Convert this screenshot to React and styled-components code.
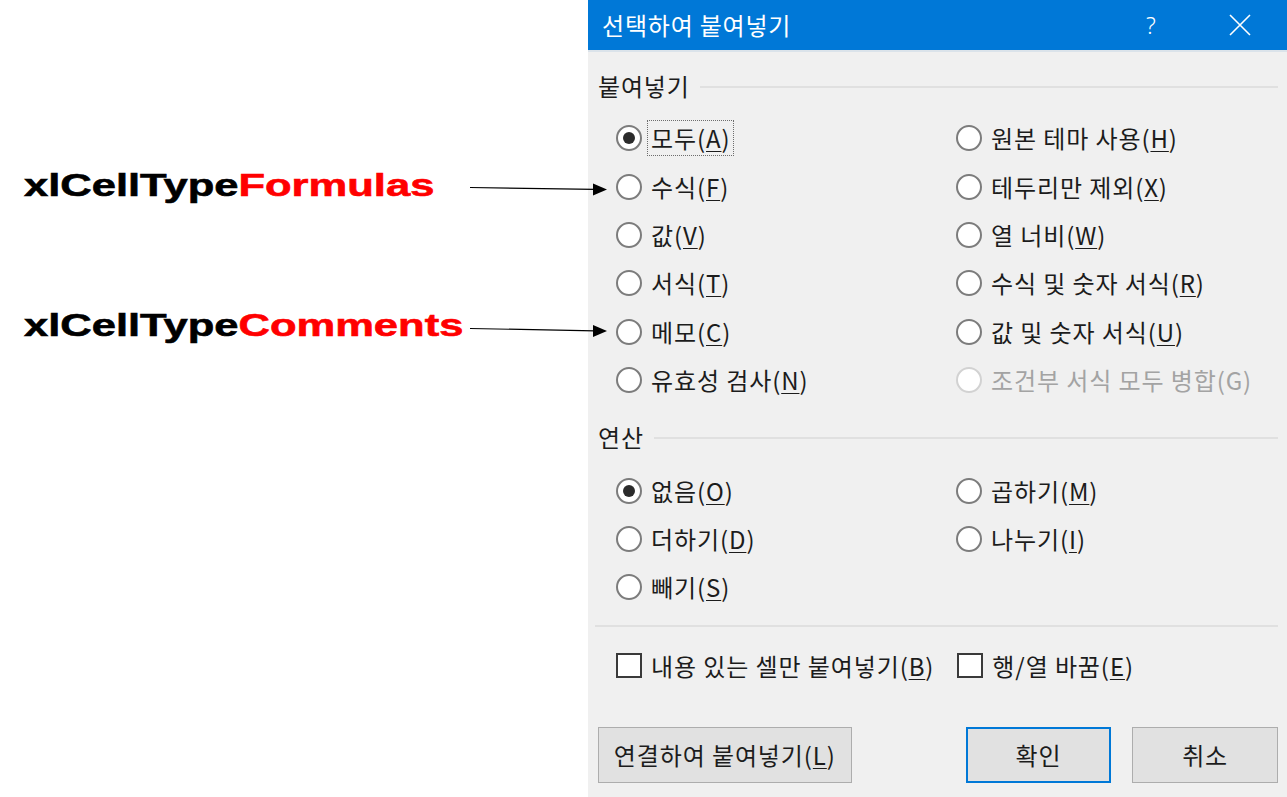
import React from "react";
import styled, { createGlobalStyle } from "styled-components";

const Global = createGlobalStyle`
  html, body { margin: 0; padding: 0; background: #ffffff; }
  body { font-family: "Noto Sans CJK KR", "Noto Sans", sans-serif; }
`;

const Page = styled.div`
  position: relative;
  display: flex;
  width: 1287px;
  height: 797px;
  overflow: hidden;
  background: #ffffff;
`;

const LeftPanel = styled.div`
  width: 588px;
  flex: none;
  display: flex;
  flex-direction: column;
  padding: 165px 0 0 24px;
  box-sizing: border-box;
`;

const Annotation = styled.div`
  font-family: "Liberation Sans", Arial, sans-serif;
  font-weight: 700;
  font-size: 32px;
  line-height: 40px;
  height: 40px;
  white-space: nowrap;
  color: #000;
  -webkit-text-stroke: 0.6px currentColor;
  transform: scaleX(1.36);
  transform-origin: left center;
  margin-bottom: ${(p) => p.$gap || 0}px;
`;

const Red = styled.span`
  color: #ff0000;
`;

const ArrowLayer = styled.svg`
  position: absolute;
  left: 0;
  top: 0;
  pointer-events: none;
`;

const Dialog = styled.div`
  width: 699px;
  flex: none;
  background: #f0f0f0;
  display: flex;
  flex-direction: column;
  color: #1c1c1c;
  font-size: 24px;
  letter-spacing: 0.9px;
`;

const TitleBar = styled.div`
  height: 50px;
  background: #0078d7;
  border-bottom: 2px solid #dbe3ea;
  display: flex;
  align-items: center;
  padding-left: 14px;
  color: #ffffff;
  flex: none;
`;

const Title = styled.div`
  flex: 1;
  font-size: 24px;
  line-height: 30px;
  letter-spacing: 0.8px;
`;

const HelpButton = styled.div`
  width: 46px;
  margin-right: 19px;
  text-align: center;
  font-family: "Noto Sans", sans-serif;
  font-size: 23px;
  font-weight: 300;
  letter-spacing: 0;
`;

const CloseButton = styled.div`
  width: 94px;
  display: flex;
  justify-content: center;
  align-items: center;
`;

const Body = styled.div`
  padding: 19px 9px 0 10px;
  display: flex;
  flex-direction: column;
`;

const SectionHeader = styled.div`
  display: flex;
  align-items: center;
  gap: 10px;
  height: 30px;
  line-height: 30px;
  letter-spacing: 0.8px;
  margin-top: ${(p) => p.$top || 0}px;
`;

const SectionLine = styled.div`
  flex: 1;
  height: 2px;
  background: #e0e0e0;
  margin-top: 1px;
`;

const OptionGrid = styled.div`
  display: grid;
  grid-auto-flow: column;
  grid-template-columns: 340px 1fr;
  grid-template-rows: repeat(${(p) => p.$rows}, 48.4px);
  margin: ${(p) => p.$top}px 0 0 18px;
`;

const Option = styled.div`
  display: flex;
  align-items: center;
  gap: 5px;
  color: ${(p) => (p.$disabled ? "#a3a3a3" : "#1c1c1c")};
`;

const Radio = styled.span`
  width: 26px;
  height: 26px;
  box-sizing: border-box;
  border-radius: 50%;
  border: 2px solid ${(p) => (p.$disabled ? "#d2d2d2" : "#7c7c7c")};
  background: #ffffff;
  display: flex;
  align-items: center;
  justify-content: center;
  flex: none;
  &::after {
    content: "";
    display: ${(p) => (p.$checked ? "block" : "none")};
    width: 12px;
    height: 12px;
    border-radius: 50%;
    background: #2b2b2b;
  }
`;

const Label = styled.span`
  padding: 1px 2px 1px 3px;
  border: 1px dotted ${(p) => (p.$focus ? "#6d6d6d" : "transparent")};
  line-height: 32px;
  white-space: nowrap;
`;

const Key = styled.span`
  text-decoration: ${(p) => (p.$plain ? "none" : "underline")};
  text-underline-offset: 3px;
  text-decoration-thickness: 1px;
`;

const Separator = styled.div`
  height: 2px;
  background: #e0e0e0;
  margin: 13px 0 0 -3px;
`;

const CheckRow = styled.div`
  display: flex;
  align-items: center;
  margin: 24px 0 0 18px;
  height: 30px;
`;

const CheckBox = styled.span`
  width: 26px;
  height: 25px;
  box-sizing: border-box;
  border: 2px solid #3a3a3a;
  background: #ffffff;
  flex: none;
  margin-right: 9px;
`;

const CheckLabel = styled.span`
  margin-right: ${(p) => p.$gap || 0}px;
  white-space: nowrap;
  line-height: 30px;
`;

const ButtonRow = styled.div`
  display: flex;
  align-items: center;
  margin-top: 46px;
  gap: 21px;
`;

const Button = styled.div`
  width: ${(p) => p.$w}px;
  height: 56px;
  box-sizing: border-box;
  background: #e1e1e1;
  border: ${(p) => (p.$primary ? "2px solid #0078d7" : "1px solid #adadad")};
  display: flex;
  align-items: center;
  justify-content: center;
  margin-left: ${(p) => p.$ml || 0}px;
  white-space: nowrap;
`;

const acc = (text, key, plain) => (
  <>
    {text}(<Key $plain={plain}>{key}</Key>)
  </>
);

const pasteOptions = [
  { t: "모두", k: "A", checked: true, focus: true },
  { t: "수식", k: "F" },
  { t: "값", k: "V" },
  { t: "서식", k: "T" },
  { t: "메모", k: "C" },
  { t: "유효성 검사", k: "N" },
  { t: "원본 테마 사용", k: "H" },
  { t: "테두리만 제외", k: "X" },
  { t: "열 너비", k: "W" },
  { t: "수식 및 숫자 서식", k: "R" },
  { t: "값 및 숫자 서식", k: "U" },
  { t: "조건부 서식 모두 병합", k: "G", disabled: true },
];

const opOptions = [
  { t: "없음", k: "O", checked: true },
  { t: "더하기", k: "D" },
  { t: "빼기", k: "S" },
  { t: "곱하기", k: "M" },
  { t: "나누기", k: "I" },
];

function OptionItem({ o }) {
  return (
    <Option $disabled={o.disabled}>
      <Radio $checked={o.checked} $disabled={o.disabled} />
      <Label $focus={o.focus}>{acc(o.t, o.k, o.disabled)}</Label>
    </Option>
  );
}

export default function App() {
  return (
    <>
      <Global />
      <Page>
        <LeftPanel>
          <Annotation $gap={100}>
            xlCellType<Red>Formulas</Red>
          </Annotation>
          <Annotation>
            xlCellType<Red>Comments</Red>
          </Annotation>
        </LeftPanel>
        <Dialog>
          <TitleBar>
            <Title>선택하여 붙여넣기</Title>
            <HelpButton>?</HelpButton>
            <CloseButton>
              <svg width="22" height="22" viewBox="0 0 22 22">
                <path d="M1 1 L21 21 M21 1 L1 21" stroke="#ffffff" strokeWidth="1.6" fill="none" />
              </svg>
            </CloseButton>
          </TitleBar>
          <Body>
            <SectionHeader>
              <span>붙여넣기</span>
              <SectionLine />
            </SectionHeader>
            <OptionGrid $rows={6} $top={13}>
              {pasteOptions.map((o) => (
                <OptionItem key={o.k} o={o} />
              ))}
            </OptionGrid>
            <SectionHeader $top={18}>
              <span>연산</span>
              <SectionLine />
            </SectionHeader>
            <OptionGrid $rows={3} $top={14}>
              {opOptions.map((o) => (
                <OptionItem key={o.k} o={o} />
              ))}
            </OptionGrid>
            <Separator />
            <CheckRow>
              <CheckBox />
              <CheckLabel $gap={23}>{acc("내용 있는 셀만 붙여넣기", "B")}</CheckLabel>
              <CheckBox />
              <CheckLabel>{acc("행/열 바꿈", "E")}</CheckLabel>
            </CheckRow>
            <ButtonRow>
              <Button $w={254}>{acc("연결하여 붙여넣기", "L")}</Button>
              <Button $w={146} $primary $ml={93}>확인</Button>
              <Button $w={146}>취소</Button>
            </ButtonRow>
          </Body>
        </Dialog>
        <ArrowLayer width="1287" height="797" viewBox="0 0 1287 797">
          <line x1="470" y1="187.5" x2="595" y2="189.3" stroke="#000" strokeWidth="1.2" />
          <polygon points="593,183.5 607,189.5 593,195.5" fill="#000" />
          <line x1="470" y1="328.5" x2="595" y2="330.8" stroke="#000" strokeWidth="1.2" />
          <polygon points="593,325 607,331 593,337" fill="#000" />
        </ArrowLayer>
      </Page>
    </>
  );
}
